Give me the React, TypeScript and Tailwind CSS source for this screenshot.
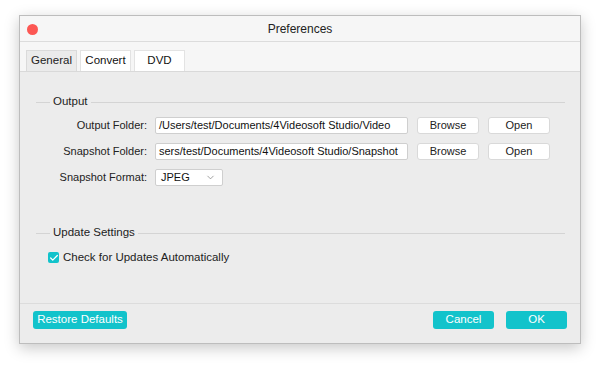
import { Check, ChevronDown } from 'lucide-react';

const font = { fontFamily: '"Liberation Sans", Arial, sans-serif' };

function Legend({ title }: { title: string }) {
  return (
    <div className="flex items-center h-[14px]">
      <div className="w-[14px] h-px bg-[#d4d4d4]" />
      <span className="px-[3px] text-[11.5px] text-[#222]">{title}</span>
      <div className="flex-1 h-px bg-[#d4d4d4]" />
    </div>
  );
}

function SmallButton({ label }: { label: string }) {
  return (
    <div className="w-[62px] h-[17px] flex items-center justify-center bg-white border border-[#d9d9d9] rounded-[3px] text-[11px] text-[#222]">
      {label}
    </div>
  );
}

function FolderRow({ label, path }: { label: string; path: string }) {
  return (
    <div className="flex items-center h-[17px]">
      <span className="w-[111px] text-right text-[11px] text-[#222]">{label}</span>
      <div className="ml-[8px] w-[253px] h-[17px] flex items-center px-[3px] bg-white border border-[#cfcfcf] rounded-[2px] text-[11px] text-[#111] overflow-hidden whitespace-nowrap">
        {path}
      </div>
      <div className="ml-[9px]">
        <SmallButton label="Browse" />
      </div>
      <div className="ml-[9px]">
        <SmallButton label="Open" />
      </div>
    </div>
  );
}

function TealButton({ label, className }: { label: string; className: string }) {
  return (
    <div className={`h-[18px] flex items-center justify-center bg-[#12c3cb] rounded-[3px] text-[11.5px] text-white ${className}`}>
      {label}
    </div>
  );
}

export default function App() {
  return (
    <div className="w-[600px] h-[366px] bg-white pt-[15px] pl-[19px]" style={font}>
      <div className="w-[562px] h-[329px] flex flex-col border border-[#bdbdbd] bg-[#ececec] shadow-[0_4px_14px_rgba(0,0,0,0.22)]">
        {/* title bar */}
        <div className="relative h-[26px] flex items-center justify-center bg-[#f6f6f6] border-b border-[#dcdcdc]">
          <div className="absolute left-[7px] top-[8px] w-[11px] h-[11px] rounded-full bg-[#fc5753]" />
          <span className="text-[12px] text-[#222]">Preferences</span>
        </div>

        {/* tabs */}
        <div className="h-[30px] flex items-end gap-[3px] pl-[6px] bg-[#f6f6f6] border-b border-[#d9d9d9]">
          <div className="w-[51px] h-[21px] flex items-center justify-center bg-[#ebebeb] border border-b-0 border-[#dadada] text-[11.5px] text-[#222]">
            General
          </div>
          <div className="w-[51px] h-[21px] flex items-center justify-center bg-white border border-b-0 border-[#e3e3e3] text-[11.5px] text-[#111]">
            Convert
          </div>
          <div className="w-[51px] h-[21px] flex items-center justify-center bg-white border border-b-0 border-[#e3e3e3] text-[11.5px] text-[#111]">
            DVD
          </div>
        </div>

        {/* content */}
        <div className="flex-1 flex flex-col pl-[16px] pr-[15px] pt-[23px]">
          <Legend title="Output" />
          <div className="flex flex-col gap-[9px] mt-[8px]">
            <FolderRow label="Output Folder:" path="/Users/test/Documents/4Videosoft Studio/Video" />
            <FolderRow label="Snapshot Folder:" path="sers/test/Documents/4Videosoft Studio/Snapshot" />
            <div className="flex items-center h-[17px]">
              <span className="w-[111px] text-right text-[11px] text-[#222]">Snapshot Format:</span>
              <div className="ml-[8px] w-[68px] h-[17px] flex items-center justify-between pl-[5px] pr-[6px] bg-white border border-[#cfcfcf] rounded-[2px] text-[11px] text-[#111]">
                JPEG
                <ChevronDown size={11} strokeWidth={1.5} className="text-[#777]" />
              </div>
            </div>
          </div>

          <div className="mt-[40px]">
            <Legend title="Update Settings" />
          </div>
          <div className="flex items-center mt-[9px] ml-[12px]">
            <div className="w-[11px] h-[11px] rounded-[2px] bg-[#12c3cb] flex items-center justify-center">
              <Check size={10} strokeWidth={3} className="text-white" />
            </div>
            <span className="ml-[4px] text-[11.5px] text-[#222]">Check for Updates Automatically</span>
          </div>
        </div>

        {/* footer */}
        <div className="h-[40px] flex items-start pt-[7px] px-[13px] border-t border-[#dcdcdc]">
          <TealButton label="Restore Defaults" className="w-[94px]" />
          <div className="flex-1" />
          <TealButton label="Cancel" className="w-[61px]" />
          <TealButton label="OK" className="w-[61px] ml-[12px]" />
        </div>
      </div>
    </div>
  );
}
